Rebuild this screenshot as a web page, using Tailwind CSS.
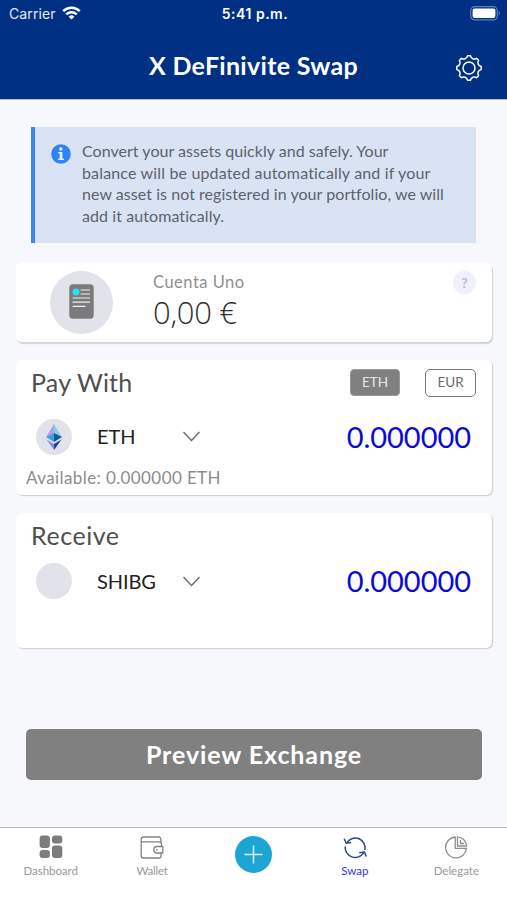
<!DOCTYPE html>
<html lang="en">
<head>
<meta charset="utf-8">
<title>X DeFinivite Swap</title>
<script src="https://cdn.jsdelivr.net/npm/@tailwindcss/browser@4"></script>
</head>
<body class="w-[507px] h-[900px] overflow-hidden bg-[#f6f8fc] font-['Lato',sans-serif] flex flex-col whitespace-nowrap">
<header class="h-[100px] shrink-0 bg-[#003083] border-b border-[#a9bcdb] text-white">
  <div class="h-[27px] grid grid-cols-3 items-center pl-[9px] pr-[6px] font-['Inter',sans-serif]">
    <div class="flex items-center gap-[6px]">
      <span class="text-[14px] tracking-[0.1px] text-white/90">Carrier</span>
      <svg class="w-[19px] h-[14px] -mt-[2px]" viewBox="0 0 19 14" fill="none" stroke="white" stroke-width="2.5"><path d="M1.2 5.2a11.7 11.7 0 0 1 16.6 0M4.3 8.3a7.4 7.4 0 0 1 10.4 0"/><path d="M9.5 13.6L6.6 10.7a4.2 4.2 0 0 1 5.8 0z" fill="white" stroke="none"/></svg>
    </div>
    <span class="text-center text-[14px] font-semibold tracking-[0.5px]">5:41 p.m.</span>
    <svg class="justify-self-end w-[31px] h-[15px]" viewBox="0 0 31 15"><rect x=".7" y=".7" width="26.6" height="13.2" rx="4" fill="none" stroke="#6580b6" stroke-width="1.2"/><rect x="2.6" y="2.6" width="22.8" height="9.4" rx="2" fill="white"/><path d="M28.8 5q2 2.2 0 4.6z" fill="#6580b6"/></svg>
  </div>
  <div class="h-[72px] grid grid-cols-[1fr_auto_1fr] items-center pr-[25px] pl-[25px]">
    <span></span>
    <h1 class="text-[25px] leading-[30px] font-bold tracking-[0.3px] mt-[4px]">X DeFinivite Swap</h1>
    <svg class="justify-self-end w-[26px] h-[26px] mt-[10px]" viewBox="-13 -13 26 26" fill="none" stroke="white" stroke-width="1.5" stroke-linejoin="round"><path d="M-1.500-12.200L1.500-12.200C2.200-9.200 5.200-8 7.570-9.690L9.690-7.570C8-5.200 9.200-2.200 12.200-1.500L12.200 1.500C9.200 2.200 8 5.200 9.690 7.570L7.570 9.690C5.200 8 2.200 9.200 1.500 12.200L-1.500 12.200C-2.200 9.200-5.200 8-7.570 9.690L-9.690 7.570C-8 5.200-9.200 2.200-12.200 1.500L-12.200-1.500C-9.200-2.200-8-5.200-9.690-7.570L-7.570-9.690C-5.200-8-2.200-9.200-1.500-12.200Z"/><circle r="6"/></svg>
  </div>
</header>
<main class="flex-1 flex flex-col pt-[27px] pl-[16px] pr-[15px]">
  <section class="ml-[15px] mr-[16px] h-[116px] bg-[#dae3f4] border-l-4 border-[#3d85f0] flex pl-[16px] pt-[13px] text-[#5c626d]">
    <svg class="w-[20px] h-[20px] mt-[4px] mr-[11px] shrink-0" viewBox="0 0 20 20"><circle cx="10" cy="10" r="9.8" fill="#2f83f7"/><circle cx="9.8" cy="5" r="1.7" fill="#e6effc"/><path d="M7.2 8h4.2v6.6h1.5V16H7.2v-1.4h1.5V9.4H7.2z" fill="#e6effc"/></svg>
    <p class="text-[16px] leading-[21.5px]"><span class="tracking-[0.03px]">Convert your assets quickly and safely. Your</span><br><span class="tracking-[0.16px]">balance will be updated automatically and if your</span><br><span class="tracking-[0.05px]">new asset is not registered in your portfolio, we will</span><br><span class="tracking-[0.08px]">add it automatically.</span></p>
  </section>
  <section class="mt-[19px] h-[80px] rounded-[6px] bg-white shadow-[1px_2px_1px_#d2d3d7] flex pl-[34px] pr-[16px]">
    <div class="mt-[9px] w-[63px] h-[63px] rounded-full bg-[#e1e2ea] flex items-center justify-center">
      <svg class="w-[25px] h-[35px] -mt-[2px]" viewBox="0 0 25 35"><rect x=".3" y=".3" width="24.4" height="34.4" rx="3.5" fill="#7b7b7b"/><circle cx="7" cy="8" r="3.5" fill="#2ae3f2"/><path d="M12 6h8.500M12 10h8.500M4 14h16.500M4 18.200h16.500M4 22.300h12" stroke="#f1f1f1" stroke-width="1.200" stroke-linecap="round"/></svg>
    </div>
    <div class="ml-[40px] pt-[10px] flex-1">
      <div class="text-[16.500px] leading-[21px] tracking-[0.5px] text-[#8f8f8f]">Cuenta Uno</div>
      <div class="text-[31px] leading-[38px] tracking-[-0.3px] text-[#303030] font-['Open_Sans',sans-serif] font-light">0,00 €</div>
    </div>
    <div class="mt-[9px] w-[23px] h-[23px] rounded-full bg-[#f1f1fd] text-[#bdbdcd] font-black text-[14px] flex items-center justify-center">?</div>
  </section>
  <section class="mt-[18px] h-[135px] rounded-[6px] bg-white shadow-[1px_1px_1px_#cccdd1] flex flex-col pr-[16px]">
    <div class="flex h-[45px] items-center pl-[15px]">
      <h2 class="text-[25px] leading-[30px] tracking-[0.200px] text-[#4f4f4f] flex-1 -mt-[2px]">Pay With</h2>
      <span class="w-[50px] h-[27px] rounded-[4px] bg-[#808080] border border-[#999] text-[#e8e8e8] text-[13.500px] flex items-center justify-center mr-[25px]">ETH</span>
      <span class="w-[51px] h-[28px] rounded-[5px] border border-[#777] text-[#6b6b6b] text-[13.500px] flex items-center justify-center">EUR</span>
    </div>
    <div class="flex h-[63px] items-center pl-[20px] pr-[5px]">
      <div class="w-[36px] h-[36px] rounded-full bg-[#e1e2ea] flex items-center justify-center"><svg class="w-[16px] h-[26px]" viewBox="0 0 16 26"><path d="M8 0L0 13l8-3.500z" fill="#b99af0"/><path d="M8 0l8 13-8-3.500z" fill="#7fd6d8"/><path d="M0 13l8-4v9z" fill="#3f9fe0"/><path d="M16 13L8 9v9z" fill="#1459a4"/><path d="M.5 15.500L8 20v6z" fill="#8b8be8"/><path d="M15.500 15.500L8 20v6z" fill="#1c3fae"/></svg></div>
      <span class="ml-[25px] w-[86px] text-[20px] tracking-[-0.100px] text-[#222] -mt-[1px]">ETH</span>
      <svg class="w-[17px] h-[11px]" viewBox="0 0 17 11" fill="none" stroke="#666" stroke-width="1.300"><path d="M.5 1l8 8.500 8-8.500"/></svg>
      <span class="ml-auto text-[29px] tracking-[-0.030px] text-[#0a0ad8]">0.000000</span>
    </div>
    <div class="pl-[10px] text-[17px] leading-[20px] tracking-[0.400px] text-[#8c8c8c]">Available: 0.000000 ETH</div>
  </section>
  <section class="mt-[18px] h-[135px] rounded-[6px] bg-white shadow-[1px_1px_1px_#cccdd1] flex flex-col pr-[16px]">
    <h2 class="h-[45px] pt-[7px] pl-[15px] text-[25px] leading-[30px] tracking-[0.550px] text-[#4f4f4f]">Receive</h2>
    <div class="flex h-[46px] items-center pl-[20px] pr-[5px]">
      <div class="w-[36px] h-[36px] rounded-full bg-[#e1e2ea]"></div>
      <span class="ml-[25px] w-[86px] text-[20px] tracking-[-0.100px] text-[#222] -mt-[1px]">SHIBG</span>
      <svg class="w-[17px] h-[11px]" viewBox="0 0 17 11" fill="none" stroke="#666" stroke-width="1.300"><path d="M.5 1l8 8.500 8-8.500"/></svg>
      <span class="ml-auto text-[29px] tracking-[-0.030px] text-[#0a0ad8]">0.000000</span>
    </div>
  </section>
  <button class="mt-[81px] ml-[10px] mr-[10px] h-[51px] rounded-[5px] bg-[#808080] text-white text-[25px] font-bold tracking-[0.900px]">Preview Exchange</button>
</main>
<nav class="h-[73px] shrink-0 bg-white border-t border-[#bbb] grid grid-cols-5 text-[11.500px] leading-[14px] text-[#999]">
  <div class="flex flex-col items-center pt-[7px]">
    <svg class="w-[24px] h-[24px] mb-[5px]" viewBox="0 0 24 24" fill="#7c7c7c"><rect x=".6" y=".4" width="10.300" height="12.600" rx="3"/><rect x="13" y=".4" width="10.300" height="8.200" rx="3"/><rect x=".6" y="15" width="10.300" height="8" rx="3"/><rect x="13" y="10.600" width="10.300" height="12.400" rx="3"/></svg>
    <span class="tracking-[-0.060px]">Dashboard</span>
  </div>
  <div class="flex flex-col items-center pt-[7px]">
    <svg class="w-[24px] h-[24px] mb-[5px]" viewBox="0 0 24 24" fill="none" stroke="#828282" stroke-width="1.300" stroke-linejoin="round"><path d="M21 6.800V4.500L19.800 2H3.500Q1.200 2.200 1.200 4.500V21q0 2 2 2H19q2 0 2-2v-3M1.200 6.800H19q2.500 0 2.500 2.500v2.200"/><path d="M22.800 11.500H17a3.200 3.200 0 0 0 0 6.500h5.800z"/><path d="M16 14.800h1.500"/></svg>
    <span class="tracking-[-0.200px]">Wallet</span>
  </div>
  <div class="flex flex-col items-center pt-[8px]">
    <svg class="w-[37px] h-[37px]" viewBox="0 0 37 37"><circle cx="18.500" cy="18.500" r="18.500" fill="#1ca5d5"/><path d="M9.500 18.500h18M18.500 9.500v18" stroke="#d6f1fa" stroke-width="1.500"/></svg>
  </div>
  <div class="flex flex-col items-center pt-[7px] text-[#3a32e6]">
    <svg class="w-[24px] h-[24px] mb-[5px]" viewBox="0 0 24 24" fill="none" stroke="#2a4591" stroke-width="1.500"><path d="M4 7.500A9.800 9.800 0 0 1 21.800 15M20.600 17.800A10 10 0 0 1 2.200 11.500"/><path d="M1.200 3.800l2 4.400 5-.8M23.200 21.600l-1.700-4.600-5.200.8"/></svg>
    <span>Swap</span>
  </div>
  <div class="flex flex-col items-center pt-[7px]">
    <svg class="w-[24px] h-[24px] mb-[5px]" viewBox="0 0 24 24" fill="none" stroke="#8c8c8c" stroke-width="1.300" stroke-linejoin="round"><path d="M11.200 2A10.500 10.500 0 1 0 22.500 13.300H11.200z"/><path d="M13.500 1.800V11h9.300A10 10 0 0 0 13.500 1.800z"/><path d="M16.500 5v3.500h3.500"/></svg>
    <span>Delegate</span>
  </div>
</nav>
</body>
</html>
